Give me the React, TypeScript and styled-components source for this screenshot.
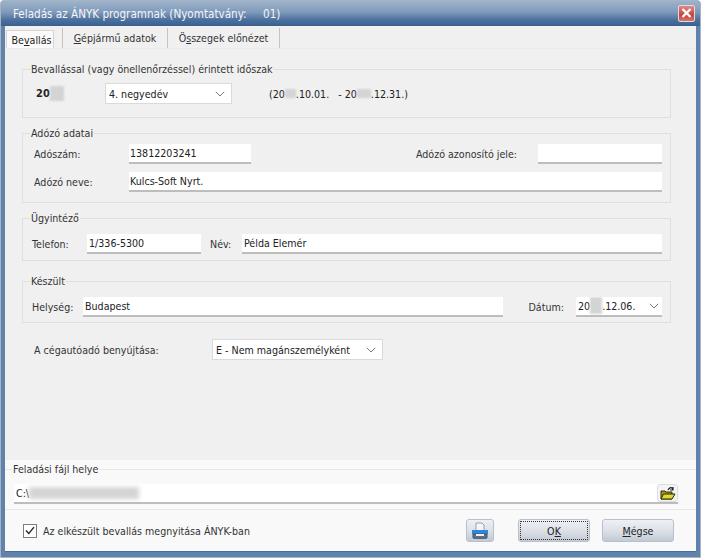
import React from "react";
import styled, { createGlobalStyle } from "styled-components";

const Global = createGlobalStyle`
  html, body { margin: 0; padding: 0; background: #fff; }
  body { font-family: "DejaVu Sans", "Noto Sans", sans-serif; font-stretch: condensed; font-size: 10.6px; color: #222; }
`;

const Win = styled.div`
  width: 701px; height: 558px; box-sizing: border-box; display: flex; flex-direction: column;
  background: #5f83ad; border: 1px solid #a8b4c4; border-radius: 4px 4px 0 0; overflow: hidden;
`;
const TitleBar = styled.div`
  height: 25px; flex: none; display: flex; align-items: center; justify-content: space-between;
  padding: 0 6px 0 12px; box-sizing: border-box;
  background: linear-gradient(#9db3cb 0%, #7f9aba 45%, #4d719e 75%, #38608f 100%);
  color: #f4f6f9; font-size: 11.6px;
`;
const CloseBtn = styled.div`
  width: 15px; height: 15px; margin-top: -1px; margin-right: -1px; display: flex; align-items: center; justify-content: center;
  background: linear-gradient(#e48a84, #c8413c 60%, #d9736c); border: 1px solid #d6dce4; border-radius: 2px;
`;
const Client = styled.div`
  flex: 1; margin: 0 4px 5px 4px; display: flex; flex-direction: column; background: #f0f0f0;
  border-bottom: 1px solid #456c9b; min-height: 0;
`;
const Tabs = styled.div`
  display: flex; height: 22px; padding: 0 0 0 1px; flex: none; align-items: flex-end;
`;
const Tab = styled.div<{ $w: number }>`
  width: ${p => p.$w}px; height: 20px; box-sizing: border-box;
  display: flex; align-items: center; justify-content: center; color: #333;
  border-right: 1px solid #c4c4c4;
  u { text-underline-offset: 1px; }
`;
const FirstTab = styled(Tab)`
  justify-content: flex-start;
`;
const ActiveFace = styled.div`
  width: 48px; height: 18px; margin-top: 2px; padding-left: 3px; box-sizing: border-box; display: flex; align-items: center; justify-content: center;
  background: #fbfbfb; border: 1px solid #d4d4d4; border-bottom: none; color: #222; white-space: nowrap;
  u { text-underline-offset: 1px; }
`;
const Pane = styled.div`
  flex: 1; display: flex; flex-direction: column; padding: 13px 25px 0 17px; min-height: 0; border-top: 1px solid #ebebeb;
`;
const Group = styled.fieldset<{ $h: number; $mt: number; $pt?: number }>`
  margin: ${p => p.$mt}px 0 0 0; padding: ${p => p.$pt ?? 0}px 8px 0 9px; height: ${p => p.$h}px; box-sizing: border-box;
  border: 1px solid #dfdfdf; display: flex; flex-direction: column; min-width: 0;
  legend { padding: 0 1px; margin-left: -2px; line-height: 14px; color: #333; }
`;
const Row = styled.div<{ $mt?: number }>`
  display: flex; align-items: center; margin-top: ${p => p.$mt ?? 0}px; height: 21px;
`;
const Label = styled.span<{ $w?: number; $ml?: number }>`
  width: ${p => (p.$w ? `${p.$w}px` : "auto")}; flex: none; color: #333; box-sizing: border-box;
  padding-left: ${p => p.$ml ?? 0}px; white-space: nowrap;
`;
const Field = styled.div<{ $w?: number; $pad?: number; $ml?: number }>`
  ${p => (p.$w ? `width:${p.$w}px;flex:none;` : "flex:1;")}
  height: 20px; box-sizing: border-box; background: #fff; border-bottom: 2px solid #bdbdbd;
  margin-left: ${p => p.$ml ?? 0}px;
  display: flex; align-items: center; padding: 0 ${p => p.$pad ?? 2}px; color: #222; white-space: nowrap; overflow: hidden;
`;
const DateField = styled(Field)`
  justify-content: space-between; padding: 0 3px 0 2px;
`;
const DateText = styled.span`
  display: inline-flex; align-items: center;
`;
const Combo = styled.div<{ $w: number }>`
  width: ${p => p.$w}px; flex: none; height: 21px; box-sizing: border-box; background: #fff;
  border: 1px solid #dadada; display: flex; align-items: center; justify-content: space-between; padding: 0 6px 0 3px;
  color: #222; white-space: nowrap;
`;
const Year = styled.span`
  font-weight: 700; font-size: 11px; color: #222; display: inline-flex; align-items: center; width: 69px; flex: none; margin-left: 4px;
`;
const Smudge = styled.span<{ $w: number; $h?: number; $blur?: number }>`
  display: inline-block; width: ${p => p.$w}px; height: ${p => p.$h ?? 14}px; background: #d4d4d4;
  filter: blur(${p => p.$blur ?? 1}px); flex: none;
`;
const Spacer = styled.div`flex: 1;`;
const Period = styled.span`
  margin-left: 37px; color: #222; white-space: nowrap; display: inline-flex; align-items: center;
`;
const ExtraRow = styled.div`
  display: flex; align-items: center; margin: 16px 0 0 12px; height: 21px;
`;
const Footer = styled.div`
  flex: none; height: 91px; background: #f9f9f9; display: flex; flex-direction: column; padding-top: 2px; box-sizing: border-box;
`;
const FileSet = styled.fieldset`
  margin: 0; padding: 0; border: none; border-top: 1px solid #e6e6e6; min-width: 0; height: 48px; box-sizing: border-box;
  border-bottom: 1px solid #e6e6e6; display: flex; flex-direction: column;
  legend { margin-left: 7px; padding: 0 1px; line-height: 14px; color: #333; }
`;
const PathRow = styled.div`
  display: flex; align-items: stretch; margin: 8px 18px 0 9px; height: 19px; position: relative;
`;
const FolderBtn = styled.div`
  position: absolute; right: 0; top: 0; width: 21px; height: 18px; box-sizing: border-box; background: #f4f4f4;
  border: 1px solid #dcdcdc; border-radius: 3px; display: flex; align-items: center; justify-content: center;
`;
const Actions = styled.div`
  flex: 1; display: flex; align-items: center; padding: 0 22px 0 18px;
`;
const Check = styled.div`
  width: 12px; height: 12px; border: 1px solid #7d7d7d; background: #fff; display: flex; align-items: center; justify-content: center; margin-right: 6px;
`;
const Btn = styled.div<{ $w: number; $focus?: boolean; $ml?: number }>`
  width: ${p => p.$w}px; height: 23px; box-sizing: border-box; border-radius: 3px; border: 1px solid #b7c0cc;
  background: linear-gradient(#eef0f4, #dde1e7 50%, #c3cad5); display: flex; align-items: center; justify-content: center;
  color: #222; flex: none; margin-left: ${p => p.$ml ?? 0}px;
  u { text-underline-offset: 1px; }
  ${p => (p.$focus ? `outline: 1px dotted #333; outline-offset: -3px;` : "")}
`;

const Chevron = () => (
  <svg width="10" height="6" viewBox="0 0 10 6"><path d="M.8.8 5 5 9.2.8" fill="none" stroke="#7a7a7a" strokeWidth="1" /></svg>
);

export default function App() {
  return (
    <>
      <Global />
      <Win>
        <TitleBar>
          <span>Feladás az ÁNYK programnak (Nyomtatvány: &nbsp;&nbsp;&nbsp;&nbsp;01)</span>
          <CloseBtn>
            <svg width="11" height="10" viewBox="0 0 11 10"><path d="M1.5 1 9.5 9M9.5 1 1.5 9" stroke="#fff" strokeWidth="2.4" /></svg>
          </CloseBtn>
        </TitleBar>
        <Client>
          <Tabs>
            <FirstTab $w={57}><ActiveFace>Be<u>v</u>allás</ActiveFace></FirstTab>
            <Tab $w={105}><u>G</u>épjármű adatok</Tab>
            <Tab $w={112}>Ö<u>s</u>szegek előnézet</Tab>
          </Tabs>
          <Pane>
            <Group $h={56} $mt={0} $pt={7}>
              <legend>Bevallással (vagy önellenőrzéssel) érintett időszak</legend>
              <Row>
                <Year>20<Smudge $w={14} $h={15} /></Year>
                <Combo $w={127}>4. negyedév<Chevron /></Combo>
                <Period>(20<Smudge $w={11} $h={9} />.10.01. &nbsp;&nbsp;- 20<Smudge $w={14} $h={9} />.12.31.)</Period>
              </Row>
            </Group>
            <Group $h={77} $mt={8} $pt={3}>
              <legend>Adózó adatai</legend>
              <Row>
                <Label $w={97} $ml={2}>Adószám:</Label>
                <Field $w={122} $pad={1}>13812203241</Field>
                <Spacer />
                <Label>Adózó azonosító jele:</Label>
                <Field $w={124} $ml={21} />
              </Row>
              <Row $mt={7}>
                <Label $w={97} $ml={2}>Adózó neve:</Label>
                <Field $pad={1}>Kulcs-Soft Nyrt.</Field>
              </Row>
            </Group>
            <Group $h={50} $mt={8} $pt={8}>
              <legend>Ügyintéző</legend>
              <Row>
                <Label $w={55}>Telefon:</Label>
                <Field $w={114}>1/336-5300</Field>
                <Label $w={41} $ml={9}>Név:</Label>
                <Field>Példa Elemér</Field>
              </Row>
            </Group>
            <Group $h={49} $mt={13} $pt={8}>
              <legend>Készült</legend>
              <Row>
                <Label $w={51}>Helység:</Label>
                <Field $w={420}>Budapest</Field>
                <Spacer />
                <Label>Dátum:</Label>
                <DateField $w={86} $ml={12}>
                  <DateText>20<Smudge $w={12} $h={17} />.12.06.</DateText><Chevron />
                </DateField>
              </Row>
            </Group>
            <ExtraRow>
              <Label $w={178}>A cégautóadó benyújtása:</Label>
              <Combo $w={171}>E - Nem magánszemélyként<Chevron /></Combo>
            </ExtraRow>
          </Pane>
          <Footer>
            <FileSet>
              <legend>Feladási fájl helye</legend>
              <PathRow>
                <Field $pad={2}>C:\<Smudge $w={110} $h={12} $blur={2} /></Field>
                <FolderBtn>
                  <svg width="16" height="15" viewBox="0 0 16 15">
                    <path d="M1 5h4l1 1h6v7H1z" fill="#a8981a" stroke="#2a2a10" strokeWidth="1" />
                    <path d="M1 13 3.500 8H15l-3 5z" fill="#e2d92a" stroke="#2a2a10" strokeWidth="1" />
                    <path d="M8 4c1-2 3-3 4-2l1 2m0-3v3h-3" fill="none" stroke="#222" strokeWidth="1.200" />
                  </svg>
                </FolderBtn>
              </PathRow>
            </FileSet>
            <Actions>
              <Check>
                <svg width="10" height="9" viewBox="0 0 10 9"><path d="M1 4.500 3.800 7.500 9 1.200" fill="none" stroke="#222" strokeWidth="1.300" /></svg>
              </Check>
              <Label>Az elkészült bevallás megnyitása ÁNYK-ban</Label>
              <Spacer />
              <Btn $w={28}>
                <svg width="18" height="18" viewBox="0 0 18 18">
                  <path d="M5 1h6l2 2v6H5z" fill="#f6f6f6" stroke="#9aa0a8" />
                  <path d="M1 8h16v4H1z" fill="#2f87dc" />
                  <path d="M2 12h14v3.500a.8.8 0 0 1-.8.8H2.800a.8.8 0 0 1-.8-.8z" fill="#5f7186" stroke="#3f5468" />
                  <path d="M5 12h8v2H5z" fill="#eef0f3" />
                </svg>
              </Btn>
              <Btn $w={72} $ml={24} $focus><span>O<u>K</u></span></Btn>
              <Btn $w={72} $ml={12}><span><u>M</u>égse</span></Btn>
            </Actions>
          </Footer>
        </Client>
      </Win>
    </>
  );
}
